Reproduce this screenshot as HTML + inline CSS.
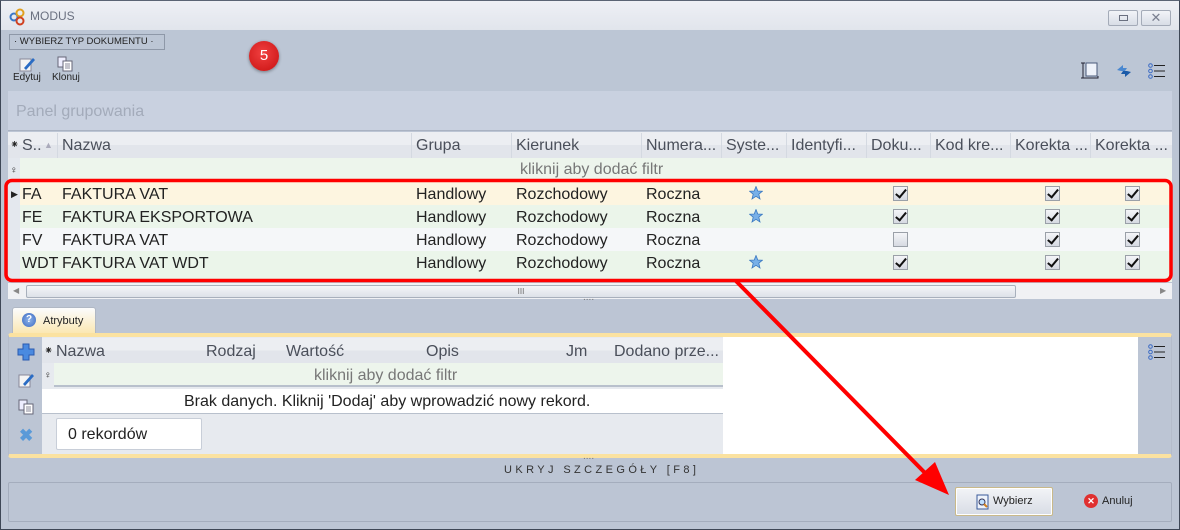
<!DOCTYPE html>
<html><head><meta charset="utf-8"><style>
*{margin:0;padding:0;box-sizing:border-box}
body{width:1180px;height:530px;overflow:hidden;font-family:"Liberation Sans",sans-serif;background:#bcc5d4;position:relative;color:#222}
.a{position:absolute}
.t{position:absolute;white-space:nowrap;font-size:16px;line-height:23px}
.hd{color:#4a4f5a}
.cb{position:absolute;width:15px;height:15px;border:1px solid #9aa0a8;background:linear-gradient(#f4f5f8,#d6dae2)}
.cb:after{content:"";position:absolute;left:4px;top:0px;width:4px;height:9px;border:solid #111;border-width:0 2px 2px 0;transform:rotate(40deg)}
.cb.e:after{display:none}
.sep{position:absolute;top:133px;width:1px;height:25px;background:#d4d9e1}
</style></head><body>
<!-- window border -->
<div class="a" style="left:0;top:0;width:1180px;height:530px;border:1px solid #3e4756;border-top-color:#5a6474"></div>
<!-- title bar -->
<div class="a" style="left:1px;top:1px;width:1178px;height:29px;background:linear-gradient(#eef0f5,#e1e5ec)"></div>
<svg class="a" style="left:9px;top:8px" width="18" height="18" viewBox="0 0 18 18"><circle cx="5" cy="9" r="3.5" fill="none" stroke="#3a78c8" stroke-width="2"/><circle cx="11" cy="5" r="3.5" fill="none" stroke="#e0a020" stroke-width="2"/><circle cx="11" cy="13" r="3.5" fill="none" stroke="#d04020" stroke-width="2"/></svg>
<div class="t" style="left:30px;top:5px;font-size:12px;color:#6a7080">MODUS</div>
<div class="a" style="left:1108px;top:10px;width:30px;height:16px;border:1px solid #a4abb8;border-radius:2px;background:linear-gradient(#f2f4f8,#d8dde6)"><div class="a" style="left:10px;top:4px;width:9px;height:6px;border:1px solid #6a7080"></div></div>
<div class="a" style="left:1141px;top:10px;width:30px;height:16px;border:1px solid #a4abb8;border-radius:2px;background:linear-gradient(#f2f4f8,#d8dde6);font-size:13px;text-align:center;line-height:14px;color:#7a8090">✕</div>
<!-- toolbar -->
<div class="a" style="left:8px;top:30px;width:1164px;height:61px;background:#bcc6d5"></div>
<div class="a" style="left:9px;top:34px;width:156px;height:16px;border:1px solid #8e98a8;font-size:9.5px;line-height:14px;padding-left:4px;color:#222">· WYBIERZ TYP DOKUMENTU ·</div>
<svg class="a" style="left:19px;top:56px" width="16" height="16"><rect x="1" y="3" width="11" height="12" fill="#f4f4f4" stroke="#889"/><path d="M5 12 L14 2 L16 4 L7 14 Z" fill="#2a6cc4"/></svg>
<div class="t" style="left:13px;top:71px;font-size:10px;line-height:14px">Edytuj</div>
<svg class="a" style="left:57px;top:56px" width="16" height="16"><rect x="1" y="1" width="8" height="10" fill="#eef" stroke="#667"/><rect x="6" y="5" width="9" height="10" fill="#fff" stroke="#667"/><path d="M8 8h5M8 10h5M8 12h5" stroke="#889"/></svg>
<div class="t" style="left:52px;top:71px;font-size:10px;line-height:14px">Klonuj</div>
<div class="a" style="left:249px;top:41px;width:30px;height:30px;border-radius:50%;background:radial-gradient(circle at 45% 40%,#f04040,#c81010);box-shadow:0 1px 3px rgba(0,0,0,.4);color:#fff;font-size:15px;text-align:center;line-height:30px">5</div>
<svg class="a" style="left:1080px;top:62px" width="20" height="18"><path d="M1 1h4M3 1v15M1 16h4M3 16h15v-2" stroke="#223" fill="none"/><rect x="6" y="1" width="11" height="13" fill="#eef2fa" stroke="#4a5a7a"/></svg>
<svg class="a" style="left:1115px;top:62px" width="18" height="18"><path d="M2 8 L8 3 L8 6 L12 6 L10 9 L6 9 Z" fill="#4a88d0"/><path d="M16 10 L10 15 L10 12 L6 12 L8 9 L12 9 Z" fill="#1a5aa8"/></svg>
<svg class="a" style="left:1148px;top:63px" width="18" height="16"><g fill="none" stroke="#3a6ac4"><circle cx="2.5" cy="2.5" r="1.8"/><circle cx="2.5" cy="8" r="1.8"/><circle cx="2.5" cy="13.5" r="1.8"/></g><path d="M6 2.5h11M6 8h11M6 13.5h11" stroke="#222"/></svg>
<!-- group panel -->
<div class="a" style="left:8px;top:91px;width:1164px;height:40px;background:#c9d1e0;border-bottom:1px solid #a9b2c2"></div>
<div class="t" style="left:16px;top:100px;color:#a3abba">Panel grupowania</div>
<!-- header -->
<div class="a" style="left:8px;top:132px;width:1164px;height:26px;background:linear-gradient(#eceef2 50%,#e2e5eb 50%)"></div>
<div class="t" style="left:10px;top:134px;font-size:11px">⁕</div>
<div class="t hd" style="left:22px;top:134px">S..</div>
<div class="t" style="left:44px;top:134px;font-size:9px;color:#aab">▲</div>
<div class="sep" style="left:57px"></div><div class="sep" style="left:411px"></div><div class="sep" style="left:511px"></div><div class="sep" style="left:641px"></div><div class="sep" style="left:721px"></div><div class="sep" style="left:786px"></div><div class="sep" style="left:866px"></div><div class="sep" style="left:930px"></div><div class="sep" style="left:1010px"></div><div class="sep" style="left:1090px"></div>
<div class="t hd" style="left:62px;top:134px">Nazwa</div>
<div class="t hd" style="left:416px;top:134px">Grupa</div>
<div class="t hd" style="left:516px;top:134px">Kierunek</div>
<div class="t hd" style="left:646px;top:134px">Numera...</div>
<div class="t hd" style="left:726px;top:134px">Syste...</div>
<div class="t hd" style="left:791px;top:134px">Identyfi...</div>
<div class="t hd" style="left:871px;top:134px">Doku...</div>
<div class="t hd" style="left:935px;top:134px">Kod kre...</div>
<div class="t hd" style="left:1015px;top:134px">Korekta ...</div>
<div class="t hd" style="left:1095px;top:134px">Korekta ...</div>
<!-- filter row -->
<div class="a" style="left:8px;top:158px;width:12px;height:124px;background:#e4e8ee"></div>
<div class="a" style="left:20px;top:158px;width:1152px;height:24px;background:#edf5ec"></div>
<div class="t" style="left:10px;top:159px;font-size:10px">♀</div>
<div class="t" style="left:520px;top:158px;color:#777">kliknij aby dodać filtr</div>
<!-- rows -->
<div class="a" style="left:20px;top:182px;width:1152px;height:23px;background:#fdf5e0"></div>
<div class="a" style="left:20px;top:205px;width:1152px;height:23px;background:#ebf5ea"></div>
<div class="a" style="left:20px;top:228px;width:1152px;height:23px;background:#f5f7f9"></div>
<div class="a" style="left:20px;top:251px;width:1152px;height:31px;background:#ebf5ea"></div>
<div class="t" style="left:11px;top:183px;font-size:9px">▶</div>
<div class="t" style="left:22px;top:183px">FA</div><div class="t" style="left:62px;top:183px">FAKTURA VAT</div>
<div class="t" style="left:22px;top:206px">FE</div><div class="t" style="left:62px;top:206px">FAKTURA EKSPORTOWA</div>
<div class="t" style="left:22px;top:229px">FV</div><div class="t" style="left:62px;top:229px">FAKTURA VAT</div>
<div class="t" style="left:22px;top:252px">WDT</div><div class="t" style="left:62px;top:252px">FAKTURA VAT WDT</div>
<div class="t" style="left:416px;top:183px">Handlowy</div><div class="t" style="left:516px;top:183px">Rozchodowy</div><div class="t" style="left:646px;top:183px">Roczna</div>
<div class="t" style="left:416px;top:206px">Handlowy</div><div class="t" style="left:516px;top:206px">Rozchodowy</div><div class="t" style="left:646px;top:206px">Roczna</div>
<div class="t" style="left:416px;top:229px">Handlowy</div><div class="t" style="left:516px;top:229px">Rozchodowy</div><div class="t" style="left:646px;top:229px">Roczna</div>
<div class="t" style="left:416px;top:252px">Handlowy</div><div class="t" style="left:516px;top:252px">Rozchodowy</div><div class="t" style="left:646px;top:252px">Roczna</div>
<svg class="a" style="left:749px;top:186px" width="14" height="14"><path d="M7 0.5 L8.8 5 L13.5 5.2 L9.8 8.2 L11 13 L7 10.3 L3 13 L4.2 8.2 L0.5 5.2 L5.2 5Z" fill="#78b0e8" stroke="#3a78c0" stroke-width=".8"/></svg>
<svg class="a" style="left:749px;top:209px" width="14" height="14"><path d="M7 0.5 L8.8 5 L13.5 5.2 L9.8 8.2 L11 13 L7 10.3 L3 13 L4.2 8.2 L0.5 5.2 L5.2 5Z" fill="#78b0e8" stroke="#3a78c0" stroke-width=".8"/></svg>
<svg class="a" style="left:749px;top:255px" width="14" height="14"><path d="M7 0.5 L8.8 5 L13.5 5.2 L9.8 8.2 L11 13 L7 10.3 L3 13 L4.2 8.2 L0.5 5.2 L5.2 5Z" fill="#78b0e8" stroke="#3a78c0" stroke-width=".8"/></svg>
<div class="cb" style="left:893px;top:186px"></div><div class="cb" style="left:1045px;top:186px"></div><div class="cb" style="left:1125px;top:186px"></div>
<div class="cb" style="left:893px;top:209px"></div><div class="cb" style="left:1045px;top:209px"></div><div class="cb" style="left:1125px;top:209px"></div>
<div class="cb e" style="left:893px;top:232px"></div><div class="cb" style="left:1045px;top:232px"></div><div class="cb" style="left:1125px;top:232px"></div>
<div class="cb" style="left:893px;top:255px"></div><div class="cb" style="left:1045px;top:255px"></div><div class="cb" style="left:1125px;top:255px"></div>
<!-- scrollbar -->
<div class="a" style="left:8px;top:283px;width:1164px;height:16px;background:#f0f1f4"></div>
<div class="a" style="left:26px;top:285px;width:990px;height:13px;border:1px solid #a8b0bc;border-radius:2px;background:linear-gradient(#f4f5f8,#dde1e8);font-size:8px;text-align:center;line-height:11px;color:#666">III</div>
<div class="t" style="left:13px;top:283px;font-size:8px;line-height:16px;color:#888">◀</div>
<div class="t" style="left:1160px;top:283px;font-size:8px;line-height:16px;color:#888">▶</div>
<div class="t" style="left:583px;top:292px;font-size:10px;line-height:12px;color:#777">....</div>
<!-- tab -->
<div class="a" style="left:12px;top:307px;width:84px;height:27px;border:1px solid #b0b8c4;border-bottom:none;border-radius:3px 3px 0 0;background:linear-gradient(#fbfcfd,#fbe7b0)"></div>
<div class="a" style="left:22px;top:313px;width:14px;height:14px;border-radius:50%;background:radial-gradient(#8fb4ea,#3a68c0);color:#fff;font-size:10px;text-align:center;line-height:14px;font-weight:bold">?</div>
<div class="t" style="left:43px;top:310px;font-size:11px">Atrybuty</div>
<div class="a" style="left:8px;top:333px;width:1164px;height:125px;border:1px solid #b4bccb;border-top:4px solid #fbe2a0;border-bottom:4px solid #fbe2a0;border-radius:3px;background:#bcc5d4"></div>
<div class="a" style="left:42px;top:337px;width:681px;height:117px;background:#e7eaef"></div>
<div class="a" style="left:723px;top:337px;width:415px;height:117px;background:#fff"></div>
<div class="a" style="left:42px;top:338px;width:681px;height:25px;background:linear-gradient(#eceef2 50%,#e2e5eb 50%)"></div>
<div class="t" style="left:44px;top:340px;font-size:11px">⁕</div>
<div class="t hd" style="left:56px;top:340px">Nazwa</div>
<div class="t hd" style="left:206px;top:340px">Rodzaj</div>
<div class="t hd" style="left:286px;top:340px">Wartość</div>
<div class="t hd" style="left:426px;top:340px">Opis</div>
<div class="t hd" style="left:566px;top:340px">Jm</div>
<div class="t hd" style="left:614px;top:340px">Dodano prze...</div>
<div class="a" style="left:54px;top:363px;width:669px;height:24px;background:#edf5ec;border-bottom:2px solid #b8c0cc"></div>
<div class="t" style="left:44px;top:364px;font-size:10px">♀</div>
<div class="t" style="left:314px;top:364px;color:#777">kliknij aby dodać filtr</div>
<div class="a" style="left:42px;top:389px;width:681px;height:25px;background:#fff;border-bottom:1px solid #b8c0cc"></div>
<div class="t" style="left:184px;top:390px">Brak danych. Kliknij 'Dodaj' aby wprowadzić nowy rekord.</div>
<div class="a" style="left:56px;top:418px;width:146px;height:32px;background:#fff;border:1px solid #c8ced8;border-radius:2px"></div>
<div class="t" style="left:68px;top:423px">0 rekordów</div>
<!-- left icons -->
<svg class="a" style="left:17px;top:343px" width="18" height="18"><path d="M6 1h6v5h5v6h-5v5H6v-5H1V6h5z" fill="#4a8ae0" stroke="#2a5ab0"/></svg>
<svg class="a" style="left:18px;top:372px" width="16" height="16"><rect x="1" y="3" width="11" height="12" fill="#f4f4f4" stroke="#889"/><path d="M5 12 L14 2 L16 4 L7 14 Z" fill="#2a6cc4"/></svg>
<svg class="a" style="left:18px;top:399px" width="16" height="16"><rect x="1" y="1" width="8" height="10" fill="#eef" stroke="#667"/><rect x="6" y="5" width="9" height="10" fill="#fff" stroke="#667"/><path d="M8 8h5M8 10h5M8 12h5" stroke="#889"/></svg>
<div class="t" style="left:19px;top:424px;font-size:17px;color:#5a9ad8;font-weight:bold">✖</div>
<svg class="a" style="left:1148px;top:344px" width="18" height="16"><g fill="none" stroke="#3a6ac4"><circle cx="2.5" cy="2.5" r="1.8"/><circle cx="2.5" cy="8" r="1.8"/><circle cx="2.5" cy="13.5" r="1.8"/></g><path d="M6 2.5h11M6 8h11M6 13.5h11" stroke="#222"/></svg>
<div class="t" style="left:583px;top:452px;font-size:10px;line-height:10px;color:#777">....</div>
<div class="t" style="left:504px;top:462px;font-size:11px;line-height:16px;letter-spacing:3.4px;color:#333">UKRYJ SZCZEGÓŁY [F8]</div>
<!-- bottom bar -->
<div class="a" style="left:8px;top:482px;width:1164px;height:40px;border:1px solid #a4adbd;border-radius:2px"></div>
<div class="a" style="left:955px;top:487px;width:98px;height:29px;border:1px solid #c9b98a;border-radius:2px;background:linear-gradient(#f3f4f7,#d7dce5);box-shadow:inset 0 0 0 1px #fff"></div>
<svg class="a" style="left:976px;top:494px" width="14" height="16"><rect x="1" y="1" width="11" height="14" fill="#eef3fb" stroke="#3a5a9a"/><circle cx="6" cy="8" r="3" fill="#bfe0ff" stroke="#335"/><path d="M8 10l3 3" stroke="#d08020" stroke-width="2"/></svg>
<div class="t" style="left:993px;top:491px;font-size:11px;line-height:20px">Wybierz</div>
<div class="a" style="left:1084px;top:494px;width:14px;height:14px;border-radius:50%;background:#e03030;color:#fff;font-size:9px;text-align:center;line-height:14px;font-weight:bold">✕</div>
<div class="t" style="left:1102px;top:491px;font-size:11px;line-height:20px">Anuluj</div>
<!-- annotations -->
<svg class="a" style="left:0;top:0" width="1180" height="530">
<rect x="6" y="180.5" width="1165" height="100" rx="6" fill="none" stroke="#ff0000" stroke-width="3.5"/>
<line x1="736" y1="281" x2="930" y2="478" stroke="#ff0000" stroke-width="4"/>
<path d="M949 495 L915 480 L935 462 Z" fill="#ff0000"/>
</svg>
</body></html>
